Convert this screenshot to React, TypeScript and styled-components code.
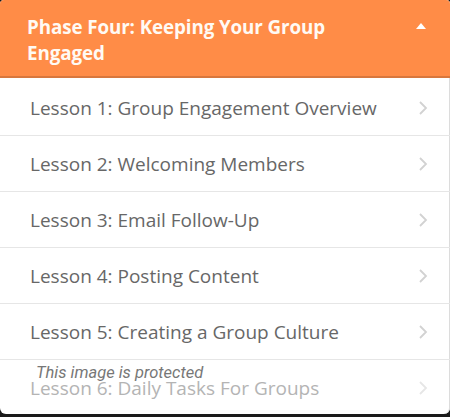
import React from "react";
import styled, { createGlobalStyle } from "styled-components";

const Global = createGlobalStyle`
  html, body {
    margin: 0;
    padding: 0;
    background: #1a1a1a;
  }
  body {
    width: 450px;
    height: 417px;
    overflow: hidden;
    font-family: "Open Sans", "Liberation Sans", sans-serif;
  }
`;

const Card = styled.section`
  position: relative;
  width: 450px;
  height: 414px;
  background: #fff;
  border-radius: 4px 4px 6px 6px;
  overflow: hidden;
  box-shadow: inset -1px 0 0 #dcdcdc;
`;

const Header = styled.header`
  display: flex;
  align-items: flex-start;
  justify-content: space-between;
  background: #ff8c47;
  border-bottom: 2px solid #d8773d;
  padding: 14px 24px 10px 27px;
  height: 52px;
`;

const Title = styled.h2`
  margin: 0;
  font-size: 18.8px;
  line-height: 26px;
  font-weight: 700;
  letter-spacing: -0.1px;
  color: #fffaf4;
  max-width: 340px;
`;

const Caret = styled.span`
  margin-top: 9px;
  width: 0;
  height: 0;
  border-left: 5px solid transparent;
  border-right: 5px solid transparent;
  border-bottom: 6px solid #fff;
`;

const List = styled.ul`
  list-style: none;
  margin: 2px 0 0;
  padding: 0;
`;

const Row = styled.li<{ $faded?: boolean }>`
  display: flex;
  align-items: center;
  justify-content: space-between;
  height: 55px;
  padding: 0 22px 0 30px;
  border-bottom: 1px solid #e6e6e6;
  font-size: 19px;
  color: ${(p) => (p.$faded ? "#b4b4b4" : "#676767")};
`;

const Chevron = styled.svg`
  width: 10px;
  height: 16px;
  flex: none;
`;

const Protected = styled.span`
  position: absolute;
  left: 36px;
  top: 363px;
  font-family: Roboto, "Liberation Sans", sans-serif;
  font-style: italic;
  font-size: 16.5px;
  color: #777;
`;

const lessons = [
  "Lesson 1: Group Engagement Overview",
  "Lesson 2: Welcoming Members",
  "Lesson 3: Email Follow-Up",
  "Lesson 4: Posting Content",
  "Lesson 5: Creating a Group Culture",
  "Lesson 6: Daily Tasks For Groups",
];

export default function App() {
  return (
    <>
      <Global />
      <Card>
        <Header>
          <Title>Phase Four: Keeping Your Group Engaged</Title>
          <Caret />
        </Header>
        <List>
          {lessons.map((l, i) => (
            <Row key={l} $faded={i === lessons.length - 1}>
              {l}
              <Chevron viewBox="0 0 10 16">
                <path d="M2 2l6 6-6 6" fill="none" stroke={i === lessons.length - 1 ? "#e6e6e6" : "#d2d2d2"} strokeWidth="1.8" />
              </Chevron>
            </Row>
          ))}
        </List>
        <Protected>This image is protected</Protected>
      </Card>
    </>
  );
}
